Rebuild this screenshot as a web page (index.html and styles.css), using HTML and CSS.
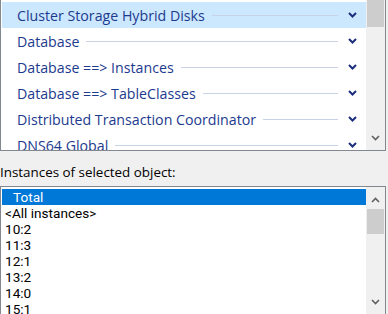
FILE: index.html
```html
<!DOCTYPE html>
<html>
<head>
<meta charset="utf-8">
<link rel="stylesheet" href="styles.css">
</head>
<body>
<div class="groups">
  <div class="glist">
    <div class="grow sel"><span class="gtext">Cluster Storage Hybrid Disks</span><span class="gline"></span><svg class="chev" width="9" height="6" viewBox="0 0 9 6"><path d="M1 1 L4.5 4.5 L8 1" fill="none" stroke="#1b2f7e" stroke-width="2"/></svg></div>
    <div class="grow"><span class="gtext">Database</span><span class="gline"></span><svg class="chev" width="9" height="6" viewBox="0 0 9 6"><path d="M1 1 L4.5 4.5 L8 1" fill="none" stroke="#1b2f7e" stroke-width="2"/></svg></div>
    <div class="grow"><span class="gtext">Database ==&gt; Instances</span><span class="gline"></span><svg class="chev" width="9" height="6" viewBox="0 0 9 6"><path d="M1 1 L4.5 4.5 L8 1" fill="none" stroke="#1b2f7e" stroke-width="2"/></svg></div>
    <div class="grow"><span class="gtext">Database ==&gt; TableClasses</span><span class="gline"></span><svg class="chev" width="9" height="6" viewBox="0 0 9 6"><path d="M1 1 L4.5 4.5 L8 1" fill="none" stroke="#1b2f7e" stroke-width="2"/></svg></div>
    <div class="grow"><span class="gtext">Distributed Transaction Coordinator</span><span class="gline"></span><svg class="chev" width="9" height="6" viewBox="0 0 9 6"><path d="M1 1 L4.5 4.5 L8 1" fill="none" stroke="#1b2f7e" stroke-width="2"/></svg></div>
    <div class="grow"><span class="gtext">DNS64 Global</span><span class="gline"></span><svg class="chev" width="9" height="6" viewBox="0 0 9 6"><path d="M1 1 L4.5 4.5 L8 1" fill="none" stroke="#1b2f7e" stroke-width="2"/></svg></div>
  </div>
  <div class="vscroll">
    <div class="thumb top"></div>
    <div class="spacer"></div>
    <svg class="arrow" width="9" height="6" viewBox="0 0 9 6"><path d="M1 1 L4.5 4.5 L8 1" fill="none" stroke="#606060" stroke-width="1.6"/></svg>
  </div>
</div>
<div class="label">Instances of selected object:</div>
<div class="listbox">
  <div class="items">
    <div class="item sel"><span class="indent">Total</span></div>
    <div class="item">&lt;All instances&gt;</div>
    <div class="item">10:2</div>
    <div class="item">11:3</div>
    <div class="item">12:1</div>
    <div class="item">13:2</div>
    <div class="item">14:0</div>
    <div class="item">15:1</div>
  </div>
  <div class="vscroll lb">
    <svg class="arrow up" width="9" height="6" viewBox="0 0 9 6"><path d="M1 5 L4.5 1.5 L8 5" fill="none" stroke="#606060" stroke-width="1.6"/></svg>
    <div class="thumb mid"></div>
    <div class="spacer"></div>
    <svg class="arrow" width="9" height="6" viewBox="0 0 9 6"><path d="M1 1 L4.5 4.5 L8 1" fill="none" stroke="#606060" stroke-width="1.6"/></svg>
  </div>
</div>
</body>
</html>
```
FILE: styles.css
```css
html, body {
  margin: 0;
  padding: 0;
}
body {
  width: 388px;
  height: 314px;
  overflow: hidden;
  background: #f0f0f0;
  font-family: "Open Sans", "Noto Sans", sans-serif;
}
.groups {
  box-sizing: border-box;
  width: 386px;
  height: 151px;
  border: 1px solid #828790;
  border-top: none;
  background: #fff;
  display: flex;
}
.glist {
  flex: 1;
  overflow: hidden;
  padding-top: 2px;
}
.grow {
  height: 26px;
  display: flex;
  align-items: center;
  margin-left: 1px;
  padding-left: 15px;
  padding-right: 9px;
}
.grow.sel {
  background: #cce8ff;
}
.gtext {
  color: #1c3a8e;
  font-size: 14.2px;
  white-space: nowrap;
}
.gline {
  flex: 1;
  height: 1px;
  background: #c9d3e6;
  margin: 1px 10px 0 7px;
}
.chev {
  display: block;
}
.vscroll {
  width: 19px;
  background: #f0f0f0;
  display: flex;
  flex-direction: column;
  align-items: center;
}
.thumb {
  width: 17px;
  background: #cdcdcd;
}
.thumb.top {
  height: 27px;
}
.spacer {
  flex: 1;
}
.arrow {
  display: block;
  margin-bottom: 9px;
}
.label {
  font-size: 13.4px;
  color: #000;
  padding: 13px 0 0 0;
  height: 22px;
  line-height: 17px;
  box-sizing: content-box;
}
.listbox {
  box-sizing: border-box;
  width: 386px;
  height: 140px;
  border: 1px solid #828790;
  background: #fff;
  display: flex;
}
.items {
  flex: 1;
  padding-top: 2px;
  overflow: hidden;
}
.item {
  height: 16px;
  line-height: 16px;
  font-family: Roboto, "Open Sans", sans-serif;
  font-size: 13.6px;
  padding-left: 3px;
  margin-left: 1px;
  color: #000;
  white-space: nowrap;
}
.item.sel {
  background: #0078d7;
  color: #fff;
}
.indent {
  padding-left: 8px;
}
.vscroll.lb {
  height: 127px;
}
.arrow.up {
  margin: 10px 0 6px 0;
}
.thumb.mid {
  height: 25px;
}
```
